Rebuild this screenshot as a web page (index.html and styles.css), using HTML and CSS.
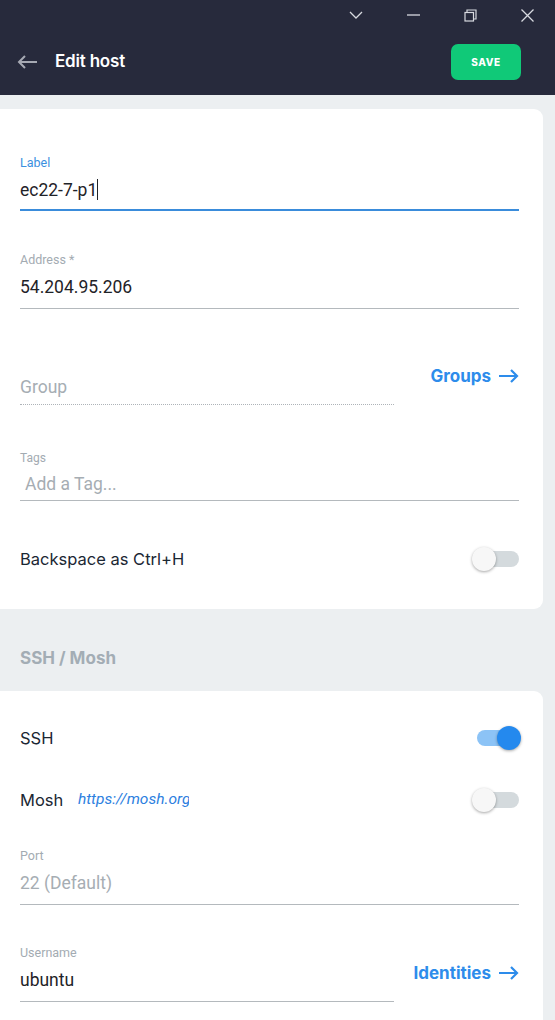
FILE: index.html
```html
<!DOCTYPE html>
<html>
<head>
<meta charset="utf-8">
<link rel="stylesheet" href="styles.css">
</head>
<body>
<header class="header">
  <div class="titlebar">
    <span class="wc"><svg width="14" height="8" viewBox="0 0 14 8"><path d="M1 1 L7 7 L13 1" fill="none" stroke="#d8dae0" stroke-width="1.3"/></svg></span>
    <span class="wc"><svg width="13" height="2" viewBox="0 0 13 2"><path d="M0 1 H13" stroke="#d8dae0" stroke-width="1.3"/></svg></span>
    <span class="wc"><svg width="13" height="13" viewBox="0 0 13 13"><path d="M3 3.5 V1 H12 V10 H9.5" fill="none" stroke="#d8dae0" stroke-width="1.2"/><rect x="1" y="3.5" width="8.5" height="8.5" fill="none" stroke="#d8dae0" stroke-width="1.2"/></svg></span>
    <span class="wc"><svg width="13" height="13" viewBox="0 0 13 13"><path d="M0.5 0.5 L12.5 12.5 M12.5 0.5 L0.5 12.5" stroke="#d8dae0" stroke-width="1.3"/></svg></span>
  </div>
  <div class="appbar">
    <svg class="back" width="21" height="14" viewBox="0 0 21 14"><path d="M20 7 H2 M8 1 L2 7 L8 13" fill="none" stroke="#a6a9b3" stroke-width="2"/></svg>
    <h1 class="title">Edit host</h1>
    <button class="save">SAVE</button>
  </div>
</header>

<main class="content">
  <section class="card card-1">
    <div class="field field-label">
      <div class="flabel active">Label</div>
      <div class="fvalue focused">ec22-7-p1<span class="caret"></span></div>
    </div>
    <div class="field field-address">
      <div class="flabel">Address *</div>
      <div class="fvalue">54.204.95.206</div>
    </div>
    <div class="row-link row-group">
      <div class="field field-group">
        <div class="fvalue placeholder dotted">Group</div>
      </div>
      <a class="link link-groups">Groups <svg width="21" height="14" viewBox="0 0 21 14"><path d="M1 7 H19 M13 1 L19 7 L13 13" fill="none" stroke="#2d8ceb" stroke-width="2.2"/></svg></a>
    </div>
    <div class="field field-tags">
      <div class="flabel">Tags</div>
      <div class="fvalue placeholder tagvalue">Add a Tag...</div>
    </div>
    <div class="switch-row row-backspace">
      <span class="switch-text">Backspace as Ctrl+H</span>
      <span class="toggle"><span class="track"></span><span class="knob"></span></span>
    </div>
  </section>

  <h2 class="section-title">SSH / Mosh</h2>

  <section class="card card-2">
    <div class="switch-row row-ssh">
      <span class="switch-text">SSH</span>
      <span class="toggle on"><span class="track"></span><span class="knob"></span></span>
    </div>
    <div class="switch-row row-mosh">
      <span class="switch-text">Mosh <span class="mosh-link">https://mosh.org</span></span>
      <span class="toggle"><span class="track"></span><span class="knob"></span></span>
    </div>
    <div class="field field-port">
      <div class="flabel">Port</div>
      <div class="fvalue placeholder">22 (Default)</div>
    </div>
    <div class="row-link row-username">
      <div class="field field-user">
        <div class="flabel">Username</div>
        <div class="fvalue">ubuntu</div>
      </div>
      <a class="link link-ident">Identities <svg width="21" height="14" viewBox="0 0 21 14"><path d="M1 7 H19 M13 1 L19 7 L13 13" fill="none" stroke="#2d8ceb" stroke-width="2.2"/></svg></a>
    </div>
  </section>
</main>
</body>
</html>
```

FILE: styles.css
```css
* { box-sizing: border-box; }
html, body { margin: 0; padding: 0; }
body {
  background: #eceff1;
  font-family: "Inter", "Roboto", sans-serif;
  width: 555px;
  height: 1020px;
  overflow: hidden;
}
.header {
  background: #272a3c;
  height: 95px;
}
.titlebar {
  height: 30px;
  display: flex;
  justify-content: flex-end;
  align-items: center;
  padding-right: 21px;
  gap: 43px;
}
.wc {
  width: 14px;
  display: flex;
  align-items: center;
  justify-content: center;
}
.appbar {
  height: 65px;
  display: flex;
  align-items: center;
  padding: 0 34px 0 17px;
}
.back { margin-right: 17px; margin-top: -2px; }
.title {
  margin: -3px 0 0 0;
  font-size: 17px;
  font-weight: 600;
  color: #ffffff;
  letter-spacing: -0.2px;
  flex: 1;
}
.save {
  width: 70px;
  height: 36px;
  border: none;
  border-radius: 7px;
  background: #10c978;
  color: #fff;
  font-family: "Inter", sans-serif;
  font-weight: 800;
  font-size: 10px;
  letter-spacing: 0.6px;
  margin-top: -1px;
}

.content { padding-top: 14px; }
.card {
  background: #ffffff;
  width: 543px;
  border-radius: 0 9px 9px 0;
  padding: 0 24px 0 20px;
  display: flex;
  flex-direction: column;
}
.card-1 { height: 500px; padding-top: 46px; }
.card-2 { height: 340px; padding-top: 32px; }

.field { display: flex; flex-direction: column; }
.flabel {
  font-family: "Roboto", sans-serif;
  font-size: 12.5px;
  line-height: 16px;
  color: #a3abb2;
}
.flabel.active { color: #3b8fe0; }
.fvalue {
  font-family: "Roboto", sans-serif;
  font-size: 17.5px;
  line-height: 24px;
  color: #1f2328;
  margin-top: 7px;
  padding-bottom: 9px;
  border-bottom: 1px solid #b4b9bd;
}
.fvalue.focused { border-bottom: 2px solid #3a8cdb; padding-bottom: 7px; }
.caret {
  display: inline-block;
  width: 1px;
  height: 21px;
  background: #1f2328;
  vertical-align: -4px;
}
.placeholder { color: #a6adb3; }
.fvalue.dotted { border-bottom: 1px dotted #aeb3b8; padding-bottom: 5px; }
.tagvalue { padding-left: 5px; margin-top: 6px; padding-bottom: 4px; }

.field-address { margin-top: 41px; }
.row-link {
  display: flex;
  justify-content: space-between;
}
.row-group { margin-top: 59px; }
.field-group { width: 374px; }
.link {
  display: flex;
  align-items: center;
  gap: 7px;
  font-family: "Inter", sans-serif;
  font-weight: 700;
  font-size: 17px;
  color: #2d8ceb;
  height: 20px;
}
.link-groups { margin-top: -2px; }
.field-tags { margin-top: 45px; }
.field-tags .flabel { font-size: 12px; }

.switch-row {
  display: flex;
  justify-content: space-between;
  align-items: center;
  height: 30px;
}
.row-backspace { margin-top: 43px; }
.switch-text {
  font-family: "Inter", sans-serif;
  font-size: 16.5px;
  color: #1b2733;
}
.toggle {
  position: relative;
  width: 48px;
  height: 26px;
  margin-right: -2px;
}
.track {
  position: absolute;
  left: 5px;
  right: 2px;
  top: 5px;
  height: 16px;
  border-radius: 8px;
  background: #d4dadd;
}
.knob {
  position: absolute;
  left: -1px;
  top: 1px;
  width: 24px;
  height: 24px;
  border-radius: 50%;
  background: #f7f7f7;
  box-shadow: 0 1px 3px rgba(0,0,0,0.35);
}
.toggle.on .track { background: #8cc3f6; left: 4px; right: 6px; }
.toggle.on .knob { left: auto; right: 0; background: #2489ee; }

.section-title {
  margin: 0;
  height: 82px;
  display: flex;
  align-items: center;
  padding: 16px 0 0 20px;
  font-family: "Inter", sans-serif;
  font-weight: 700;
  font-size: 17px;
  color: #a3adb5;
}
.row-mosh { margin-top: 32px; }
.mosh-link {
  display: inline-block;
  margin-left: 10px;
  font-family: "Roboto", sans-serif;
  font-style: italic;
  font-size: 15.5px;
  color: #2d7fdf;
  width: 111px;
  overflow: hidden;
  white-space: nowrap;
  vertical-align: -2px;
}
.field-port { margin-top: 33px; }
.row-username { margin-top: 40px; }
.field-user { width: 374px; }
.link-ident { margin-top: 18px; }
```
